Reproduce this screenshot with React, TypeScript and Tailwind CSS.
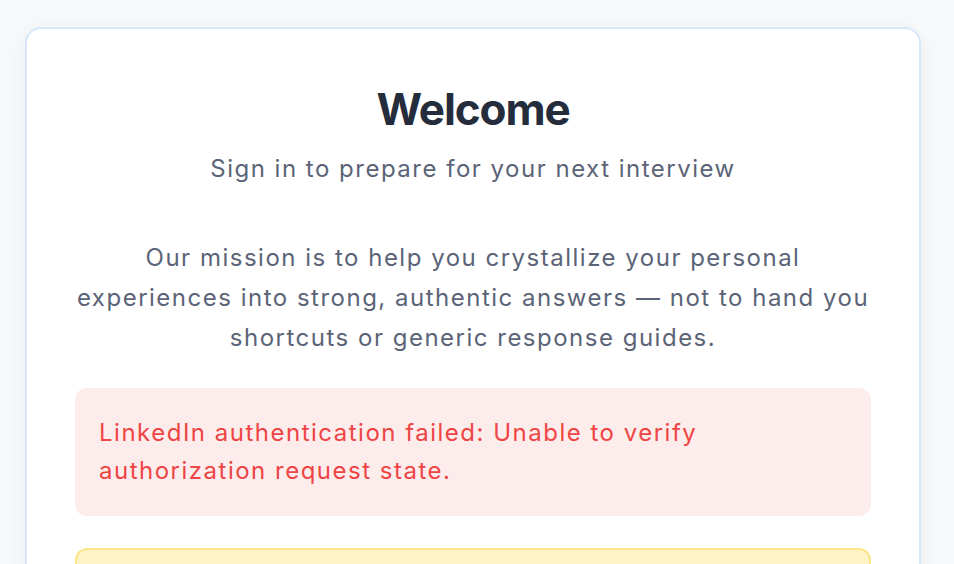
import React from "react";

const mission =
  "Our mission is to help you crystallize your personal experiences into strong, authentic answers — not to hand you shortcuts or generic response guides.";

function ErrorNotice({ message }: { message: string }) {
  return (
    <div className="rounded-xl bg-[#fdecec] px-6 pb-[26px] pt-[26px] text-[24px] leading-[38px] tracking-[1.5px] text-[#ef4444]">
      {message}
    </div>
  );
}

export default function App() {
  return (
    <div
      className="min-h-screen overflow-hidden bg-[#f8f9fa] pt-[27px]"
      style={{ fontFamily: "Inter, 'Noto Sans', sans-serif" }}
    >
      <div className="ml-[25px] w-[896px] rounded-2xl border-2 border-[#d6e7fc] bg-white px-12 pb-12 pt-[54px] shadow-[0_4px_24px_rgba(15,23,42,0.06)]">
        <h1 className="text-center text-[44px] font-bold leading-[53px] tracking-tight text-[#252d3d]">
          Welcome
        </h1>
        <p className="mt-[15px] text-center text-[24px] leading-[36px] tracking-[1.5px] text-[#5b6477]">
          Sign in to prepare for your next interview
        </p>

        <p className="mt-[51px] text-center text-[24px] leading-[40px] tracking-[1.5px] text-[#5b6477]">
          {mission}
        </p>

        <div className="mt-[30px]">
          <ErrorNotice message="LinkedIn authentication failed: Unable to verify authorization request state." />
        </div>

        <div className="mt-8 h-[120px] rounded-xl border-2 border-[#fde68a] bg-[#fef3c7]" />
      </div>
    </div>
  );
}
